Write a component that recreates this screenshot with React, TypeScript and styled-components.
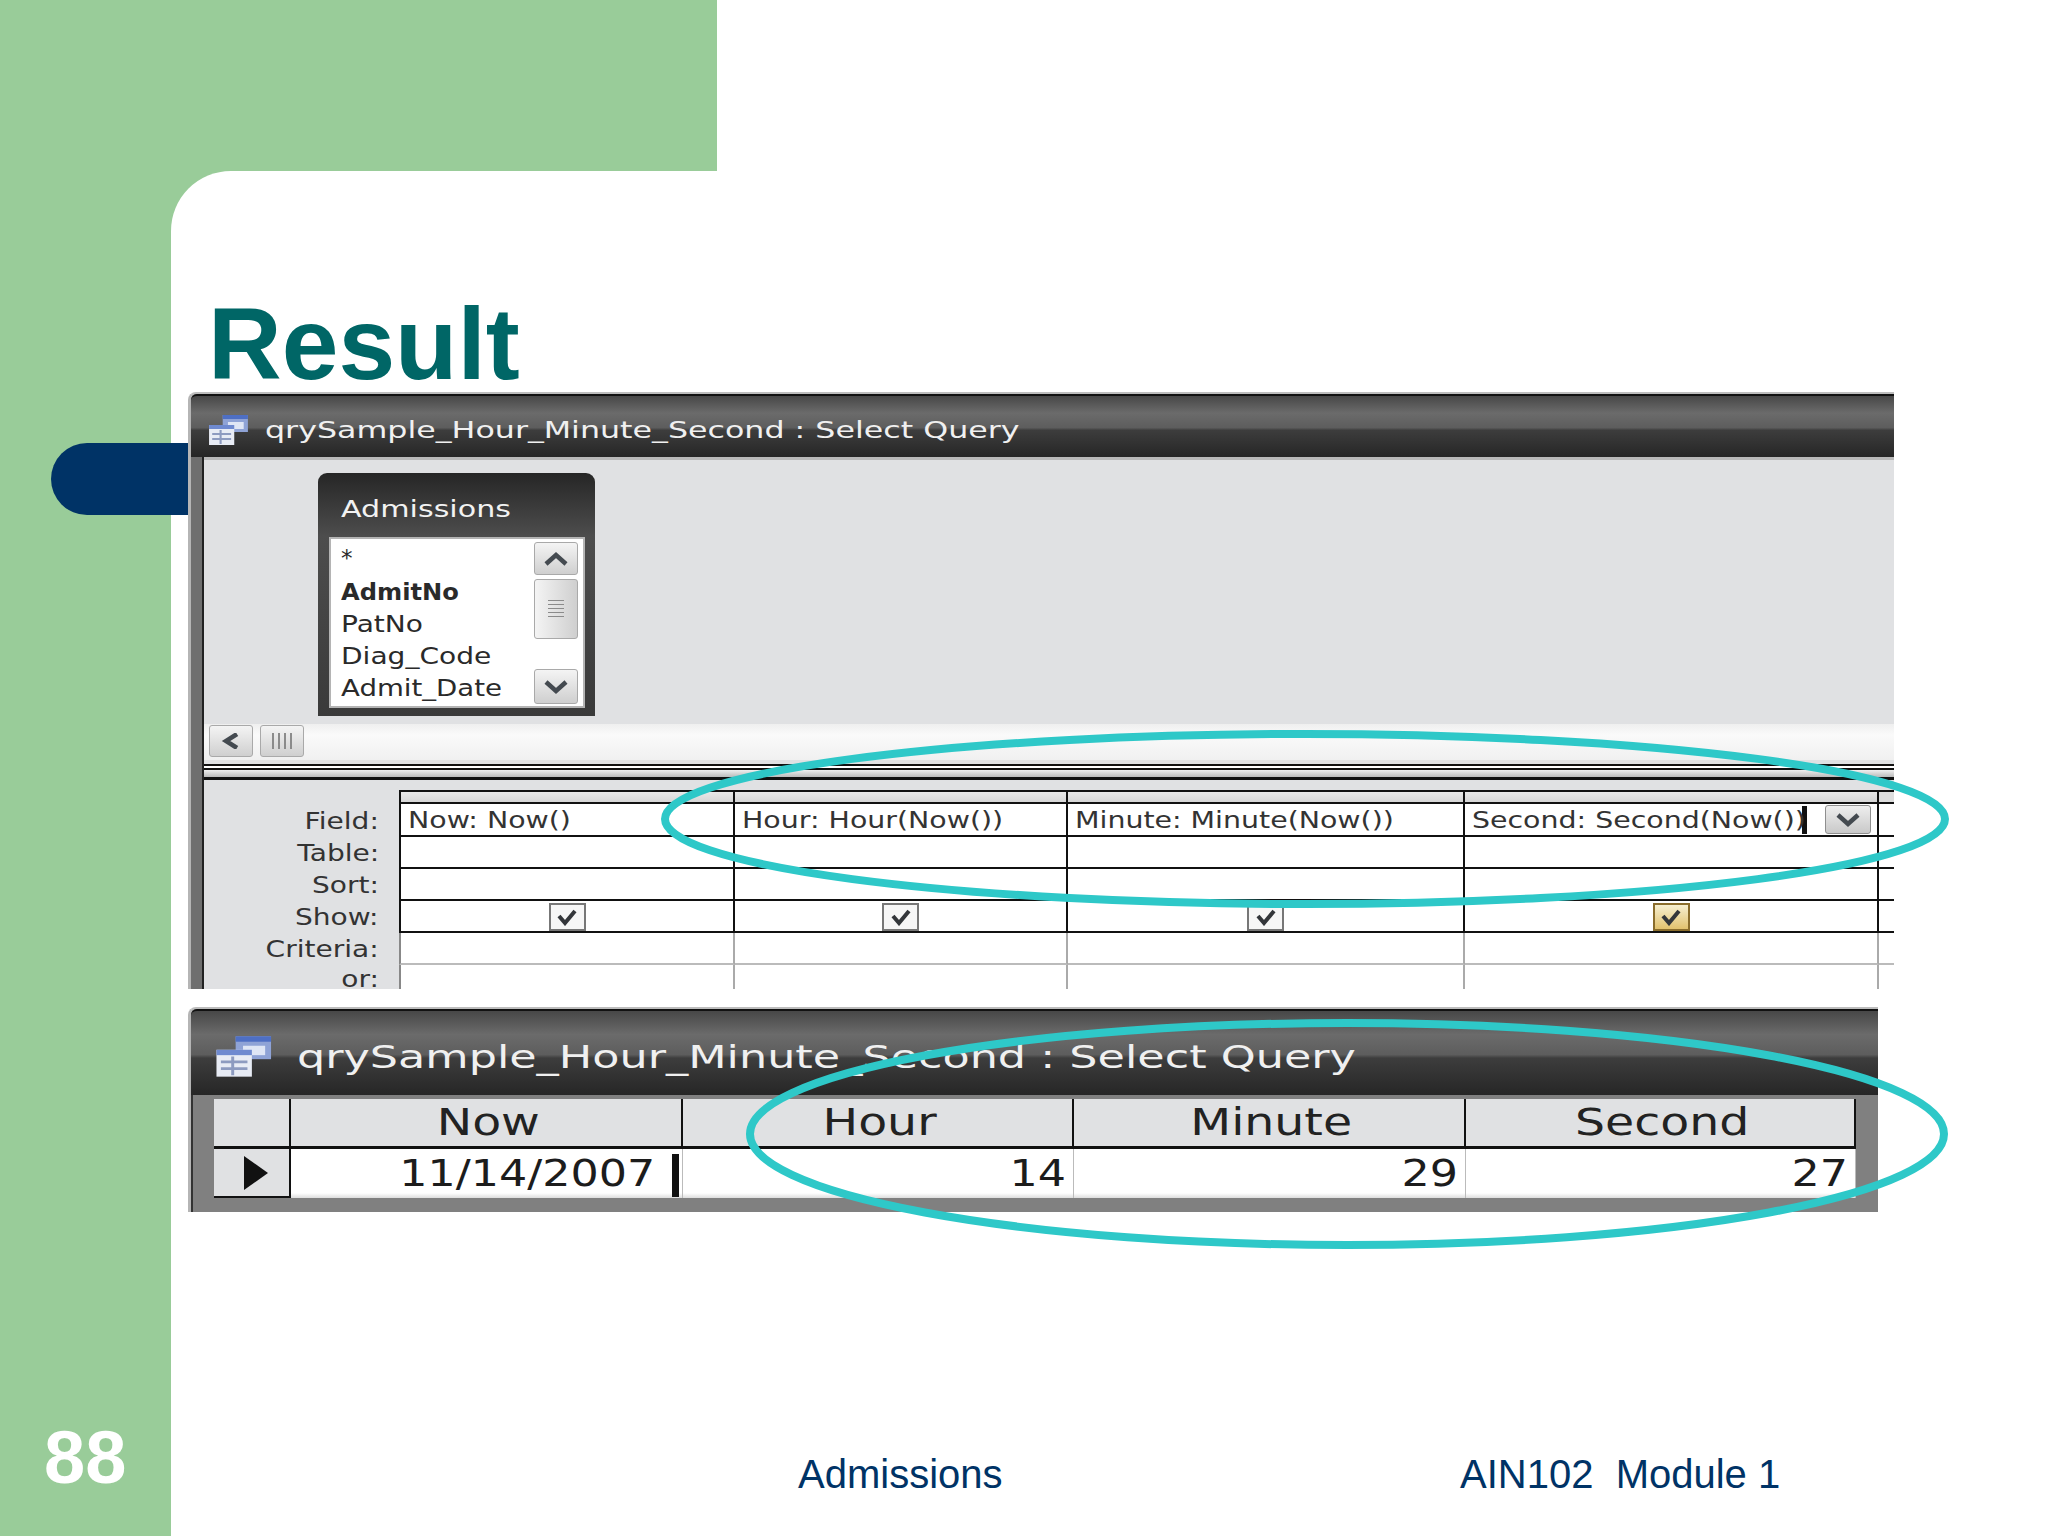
import styled, { createGlobalStyle } from 'styled-components'

const GlobalStyle = createGlobalStyle`
  html, body {
    margin: 0;
    padding: 0;
    background: #fff;
  }
`

const Slide = styled.div`
  width: 2048px;
  height: 1536px;
  display: flex;
  overflow: hidden;
  position: relative;
  font-family: 'Liberation Sans', Arial, sans-serif;
`
const Sidebar = styled.aside`
  width: 171px;
  flex-shrink: 0;
  position: relative;
  z-index: 1;
  background: #99cc99;
  display: flex;
  flex-direction: column;
  align-items: flex-start;
  padding-top: 443px;
  box-sizing: border-box;
`
const Pill = styled.div`
  width: 137px;
  height: 72px;
  flex-shrink: 0;
  margin-left: 51px;
  background: #003366;
  border-radius: 36px 0 0 36px;
`
const PageNumber = styled.div`
  margin-top: auto;
  margin-bottom: 38px;
  margin-left: 44px;
  color: #fff;
  font-weight: 700;
  font-size: 74px;
  line-height: 80px;
`
const Content = styled.main`
  flex: 1;
  padding-top: 171px;
  display: flex;
  background: linear-gradient(#99cc99, #99cc99) top left / 546px 240px no-repeat, #fff;
`
const Sheet = styled.div`
  flex: 1;
  position: relative;
  background: #fff;
  border-top-left-radius: 60px;
  display: flex;
  flex-direction: column;
  align-items: flex-start;
`
const Title = styled.h1`
  margin: 0;
  height: 221px;
  padding-left: 37px;
  box-sizing: border-box;
  display: flex;
  align-items: flex-end;
  color: #006666;
  font-size: 102px;
  line-height: 96px;
  font-weight: 700;
`
const Window = styled.section<{ $width: number; $height: number; $top?: number }>`
  width: ${(p) => p.$width}px;
  height: ${(p) => p.$height}px;
  margin: ${(p) => p.$top ?? 0}px 0 0 17px;
  box-sizing: border-box;
  display: flex;
  flex-direction: column;
  background: #6f6f6f;
  border-top: 2px solid #bdbdbd;
  border-left: 3px solid #b5b5b5;
  border-top-left-radius: 8px;
`
const TitleBar = styled.header<{ $height: number; $pad: number; $gap: number; $shift: number }>`
  height: ${(p) => p.$height}px;
  flex-shrink: 0;
  box-sizing: border-box;
  display: flex;
  align-items: center;
  gap: ${(p) => p.$gap}px;
  padding: ${(p) => p.$shift}px 0 0 ${(p) => p.$pad}px;
  border-top: 2px solid #111;
  border-top-left-radius: 6px;
  background: linear-gradient(#474747 0%, #6b6b6b 28%, #5d5d5d 52%, #3d3d3d 56%, #262626 100%);
`
const Wide = styled.span<{ $scale: number; $origin?: 'left' | 'right' | 'center' }>`
  display: inline-block;
  white-space: pre;
  font-family: 'DejaVu Sans', sans-serif;
  transform: scaleX(${(p) => p.$scale});
  transform-origin: ${(p) => p.$origin ?? 'left'} center;
`
const TitleText = styled(Wide)<{ $size: number }>`
  color: #f0f0f0;
  font-size: ${(p) => p.$size}px;
`
const Client = styled.div`
  flex: 1;
  margin-left: 11px;
  display: flex;
  flex-direction: column;
  background: #e0e1e3;
  border-left: 2px solid #222;
  min-height: 0;
`
const DesignPane = styled.div`
  height: 267px;
  flex-shrink: 0;
  padding: 13px 0 0 114px;
  box-sizing: border-box;
  border-top: 3px solid #b9b9b9;
`
const TableBox = styled.div`
  width: 277px;
  height: 243px;
  box-sizing: border-box;
  padding: 0 10px 10px 11px;
  display: flex;
  flex-direction: column;
  border-radius: 9px 9px 0 0;
  background: linear-gradient(#262626 0%, #4d4d4d 26%, #3a3a3a 100%);
`
const TableTitle = styled.div`
  height: 64px;
  flex-shrink: 0;
  display: flex;
  align-items: center;
  padding: 8px 0 0 12px;
  box-sizing: border-box;
  color: #f2f2f2;
  font-size: 23px;
`
const ListBox = styled.div`
  flex: 1;
  display: flex;
  justify-content: space-between;
  background: #fff;
  border: 2px solid #b4b4b4;
  box-sizing: border-box;
  padding: 3px 5px 2px 10px;
`
const Fields = styled.ul`
  margin: 0;
  padding: 0;
  list-style: none;
  font-size: 23px;
  color: #2a2a2a;
`
const Field = styled.li<{ $star?: boolean; $key?: boolean }>`
  height: ${(p) => (p.$star ? 34 : 32)}px;
  box-sizing: border-box;
  padding-top: ${(p) => (p.$star ? 3 : 0)}px;
  display: flex;
  align-items: ${(p) => (p.$star ? 'flex-start' : 'center')};
  font-weight: ${(p) => (p.$key ? 700 : 400)};
`
const VScroll = styled.div`
  width: 44px;
  display: flex;
  flex-direction: column;
  gap: 4px;
`
const ScrollButton = styled.div<{ $w?: number; $h: number }>`
  width: ${(p) => (p.$w ? `${p.$w}px` : 'auto')};
  height: ${(p) => p.$h}px;
  box-sizing: border-box;
  display: flex;
  align-items: center;
  justify-content: center;
  border: 1px solid #a9a9a9;
  border-radius: 3px;
  background: linear-gradient(#f4f4f4, #cfcfcf);
`
const VThumb = styled(ScrollButton)`
  margin-bottom: auto;
  background: linear-gradient(90deg, #f4f4f4, #cfcfcf);
`
const VGrip = styled.div`
  width: 16px;
  height: 18px;
  background: repeating-linear-gradient(#8b8b8b 0 1px, transparent 1px 4px);
`
const HGrip = styled.div`
  width: 20px;
  height: 16px;
  background: repeating-linear-gradient(90deg, #8b8b8b 0 2px, transparent 2px 6px);
`
const HScrollStrip = styled.div`
  height: 36px;
  flex-shrink: 0;
  display: flex;
  align-items: flex-start;
  padding-top: 1px;
  box-sizing: border-box;
  gap: 7px;
  padding-left: 5px;
  background: linear-gradient(#efefef, #fafafa 30%, #f0f0f0);
`
const Splitter = styled.div`
  height: 16px;
  flex-shrink: 0;
  box-sizing: border-box;
  border-top: 2px solid #111;
  border-bottom: 3px solid #111;
  margin-top: 4px;
  background: linear-gradient(#fff 0, #fff 2px, #111 2px, #111 4px, #efefef 4px, #bbb 100%);
`
const QueryGrid = styled.div`
  flex: 1;
  padding-top: 10px;
  display: grid;
  grid-template-columns: 195px 336px 333px 397px 414px 1fr;
  grid-template-rows: 14px 33px 32px 32px 32px 32px 1fr;
`
const RowLabel = styled.div<{ $drop?: number }>`
  display: flex;
  align-items: center;
  justify-content: flex-end;
  padding: ${(p) => p.$drop ?? 0}px 20px 0 0;
  font-size: 23px;
  line-height: 14px;
  color: #333;
`
const Cell = styled.div<{ $kind: 'head' | 'dark' | 'light' | 'last'; $center?: boolean }>`
  box-sizing: border-box;
  display: flex;
  align-items: ${(p) => (p.$center ? 'flex-end' : 'center')};
  justify-content: ${(p) => (p.$center ? 'center' : 'flex-start')};
  padding-left: ${(p) => (p.$center ? 0 : 7)}px;
  font-size: 23px;
  color: #333;
  background: ${(p) => (p.$kind === 'head' ? 'linear-gradient(#e8e8e8, #d6d6d6)' : '#fff')};
  border-right: 2px solid ${(p) => (p.$kind === 'light' || p.$kind === 'last' ? '#aaa' : '#111')};
  border-bottom: ${(p) => (p.$kind === 'last' ? '0' : `2px solid ${p.$kind === 'light' ? '#bbb' : '#111'}`)};
  ${(p) => (p.$kind === 'head' ? 'border-top: 2px solid #111;' : '')}
`
const FirstCell = styled(Cell)`
  border-left: 2px solid ${(p) => (p.$kind === 'light' || p.$kind === 'last' ? '#888' : '#111')};
`
const Tail = styled.div<{ $kind: 'head' | 'dark' | 'light' | 'last' }>`
  background: ${(p) => (p.$kind === 'head' ? '#ddd' : '#fff')};
  box-sizing: border-box;
  border-bottom: ${(p) => (p.$kind === 'last' ? '0' : `2px solid ${p.$kind === 'light' ? '#bbb' : '#111'}`)};
  ${(p) => (p.$kind === 'head' ? 'border-top: 2px solid #111;' : '')}
`
const FieldValue = styled.div`
  flex: 1;
  display: flex;
  align-items: center;
  min-width: 0;
`
const TextCaret = styled.div`
  width: 5px;
  height: 28px;
  background: #111;
  margin-left: 60px;
  margin-right: 18px;
  flex-shrink: 0;
`
const DropButton = styled(ScrollButton)`
  flex-shrink: 0;
  border-color: #8f8f8f;
  background: linear-gradient(#eee, #c9c9c9);
`
const CheckBox = styled.div<{ $active?: boolean }>`
  width: 37px;
  height: 28px;
  box-sizing: border-box;
  display: flex;
  align-items: center;
  justify-content: center;
  border: 2px solid ${(p) => (p.$active ? '#8a6d2c' : '#777')};
  background: ${(p) => (p.$active ? 'linear-gradient(#f6efd0, #e2c26e)' : '#f6f6f6')};
`
const DataPane = styled.div`
  flex: 1;
  padding: 4px 23px 14px 21px;
  display: grid;
  grid-template-columns: 77px 392px 391px 392px 390px;
  grid-template-rows: 50px 49px;
  background: #808080;
  border-left: 2px solid #333;
`
const HeadCell = styled.div`
  display: flex;
  align-items: center;
  justify-content: center;
  box-sizing: border-box;
  padding-left: 5px;
  background: #e0e1e3;
  color: #222;
  font-size: 37px;
  border-right: 2px solid #111;
  border-bottom: 3px solid #111;
`
const Selector = styled.div`
  display: flex;
  align-items: center;
  justify-content: center;
  box-sizing: border-box;
  padding-left: 8px;
  background: #e0e1e3;
  border-right: 2px solid #111;
  border-bottom: 2px solid #111;
`
const DataCell = styled.div<{ $caret?: boolean }>`
  display: flex;
  align-items: center;
  justify-content: flex-end;
  box-sizing: border-box;
  padding-right: ${(p) => (p.$caret ? 27 : 7)}px;
  position: relative;
  color: #1c1c1c;
  font-size: 37px;
  background: linear-gradient(#fff 90%, #ddd 100%);
  border-right: 1px solid #bbb;
  ${(p) =>
    p.$caret &&
    `&::after {
      content: '';
      position: absolute;
      top: 5px;
      bottom: 1px;
      right: 3px;
      width: 7px;
      background: #111;
    }`}
`
const Ovals = styled.svg`
  position: absolute;
  left: 0;
  top: 0;
  pointer-events: none;
`
const Footer = styled.footer`
  margin-top: auto;
  width: 100%;
  box-sizing: border-box;
  padding: 0 0 39px 627px;
  display: grid;
  grid-template-columns: 662px 1fr;
  color: #003366;
  font-size: 40px;
  line-height: 46px;
  white-space: pre;
`

const WindowIcon = ({ w, h }: { w: number; h: number }) => (
  <svg width={w} height={h} viewBox="0 0 40 32" preserveAspectRatio="none">
    <rect x="14" y="1" width="24" height="17" fill="#8fa3d6" />
    <rect x="14" y="1" width="24" height="4" fill="#4e6fc4" />
    <rect x="19" y="8" width="15" height="7" fill="#dfe6f5" />
    <rect x="1" y="11" width="24" height="20" fill="#e8ecf5" />
    <rect x="1" y="11" width="24" height="4" fill="#6f8ad0" />
    <path d="M4 20h18M4 25h18M12 16v14" stroke="#8d9bc0" strokeWidth="2" />
  </svg>
)

const chevrons = {
  up: 'M3 13 13 4l10 9',
  down: 'M3 3l10 9 10-9',
  left: 'M19 1 8 8l11 7',
}

const Chevron = ({ dir }: { dir: keyof typeof chevrons }) => (
  <svg width="26" height="16" viewBox="0 0 26 16">
    <path d={chevrons[dir]} fill="none" stroke="#444a50" strokeWidth="4.5" />
  </svg>
)

const Tick = () => (
  <svg width="22" height="18" viewBox="0 0 22 18">
    <path d="M3 8l6 7L19 3" fill="none" stroke="#33363a" strokeWidth="4" />
  </svg>
)

const columns = ['Now: Now()', 'Hour: Hour(Now())', 'Minute: Minute(Now())', 'Second: Second(Now())']
const rows: { label: string; kind: 'dark' | 'light' | 'last' }[] = [
  { label: 'Field:', kind: 'dark' },
  { label: 'Table:', kind: 'dark' },
  { label: 'Sort:', kind: 'dark' },
  { label: 'Show:', kind: 'dark' },
  { label: 'Criteria:', kind: 'light' },
  { label: 'or:', kind: 'last' },
]

const Row = ({ label, kind }: { label: string; kind: 'dark' | 'light' | 'last' }) => (
  <>
    <RowLabel $drop={kind === 'last' ? 4 : 0}>
      <Wide $scale={1.22} $origin="right">
        {label}
      </Wide>
    </RowLabel>
    {columns.map((c, i) => {
      const Box = i === 0 ? FirstCell : Cell
      const isShow = label === 'Show:'
      return (
        <Box key={c} $kind={kind} $center={isShow}>
          {label === 'Field:' && (
            <FieldValue>
              <Wide $scale={1.235}>{c}</Wide>
              {i === 3 && (
                <>
                  <TextCaret />
                  <DropButton $w={46} $h={29}>
                    <Chevron dir="down" />
                  </DropButton>
                </>
              )}
            </FieldValue>
          )}
          {isShow && (
            <CheckBox $active={i === 3}>
              <Tick />
            </CheckBox>
          )}
        </Box>
      )
    })}
    <Tail $kind={kind} />
  </>
)

const QueryDesign = () => (
  <QueryGrid>
    <div />
    {columns.map((c, i) =>
      i === 0 ? <FirstCell key={c} $kind="head" /> : <Cell key={c} $kind="head" />
    )}
    <Tail $kind="head" />
    {rows.map((row) => (
      <Row key={row.label} label={row.label} kind={row.kind} />
    ))}
  </QueryGrid>
)

const heads = ['Now', 'Hour', 'Minute', 'Second']
const values = ['11/14/2007', '14', '29', '27']

export default function App() {
  return (
    <Slide>
      <GlobalStyle />
      <Sidebar>
        <Pill />
        <PageNumber>88</PageNumber>
      </Sidebar>
      <Content>
        <Sheet>
          <Title>Result</Title>
          <Window $width={1706} $height={597}>
            <TitleBar $height={63} $pad={17} $gap={15} $shift={6}>
              <WindowIcon w={42} h={32} />
              <TitleText $size={23} $scale={1.378}>
                qrySample_Hour_Minute_Second : Select Query
              </TitleText>
            </TitleBar>
            <Client>
              <DesignPane>
                <TableBox>
                  <TableTitle>
                    <Wide $scale={1.31}>Admissions</Wide>
                  </TableTitle>
                  <ListBox>
                    <Fields>
                      <Field $star>
                        <Wide $scale={1}>*</Wide>
                      </Field>
                      <Field $key>
                        <Wide $scale={1.05}>AdmitNo</Wide>
                      </Field>
                      <Field>
                        <Wide $scale={1.22}>PatNo</Wide>
                      </Field>
                      <Field>
                        <Wide $scale={1.22}>Diag_Code</Wide>
                      </Field>
                      <Field>
                        <Wide $scale={1.2}>Admit_Date</Wide>
                      </Field>
                    </Fields>
                    <VScroll>
                      <ScrollButton $h={33}>
                        <Chevron dir="up" />
                      </ScrollButton>
                      <VThumb $h={60}>
                        <VGrip />
                      </VThumb>
                      <ScrollButton $h={35}>
                        <Chevron dir="down" />
                      </ScrollButton>
                    </VScroll>
                  </ListBox>
                </TableBox>
              </DesignPane>
              <HScrollStrip>
                <ScrollButton $w={44} $h={32}>
                  <Chevron dir="left" />
                </ScrollButton>
                <ScrollButton $w={44} $h={32}>
                  <HGrip />
                </ScrollButton>
              </HScrollStrip>
              <Splitter />
              <QueryDesign />
            </Client>
          </Window>
          <Window $width={1690} $height={205} $top={18}>
            <TitleBar $height={86} $pad={24} $gap={23} $shift={7}>
              <WindowIcon w={59} h={43} />
              <TitleText $size={32} $scale={1.39}>
                qrySample_Hour_Minute_Second : Select Query
              </TitleText>
            </TitleBar>
            <DataPane>
              <HeadCell />
              {heads.map((h) => (
                <HeadCell key={h}>
                  <Wide $scale={1.28} $origin="center">
                    {h}
                  </Wide>
                </HeadCell>
              ))}
              <Selector>
                <svg width="26" height="34" viewBox="0 0 26 34">
                  <path d="M1 0l24 17L1 34z" fill="#111" />
                </svg>
              </Selector>
              {values.map((v, i) => (
                <DataCell key={v} $caret={i === 0}>
                  <Wide $scale={1.2} $origin="right">
                    {v}
                  </Wide>
                </DataCell>
              ))}
            </DataPane>
          </Window>
          <Footer>
            <span>Admissions</span>
            <span>AIN102  Module 1</span>
          </Footer>
          <Ovals width="1877" height="1365" viewBox="171 171 1877 1365">
            <ellipse cx="1305" cy="819" rx="640" ry="85" fill="none" stroke="#2ec8c8" strokeWidth="8" />
            <ellipse cx="1347" cy="1134" rx="597" ry="111" fill="none" stroke="#2ec8c8" strokeWidth="8" />
          </Ovals>
        </Sheet>
      </Content>
    </Slide>
  )
}
